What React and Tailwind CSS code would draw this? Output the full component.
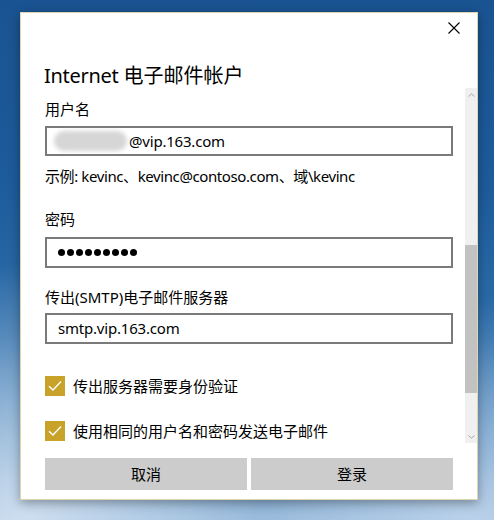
const font = "font-['Noto_Sans','Noto_Sans_CJK_SC',sans-serif]"

function Field({ children, className = '' }) {
  return (
    <div className={`flex items-center border-2 border-[#7a7a7a] bg-white pl-[11px] text-[15px] tracking-[-0.2px] text-black ${className}`}>
      {children}
    </div>
  )
}

function CheckRow({ label, className = '' }) {
  return (
    <label className={`flex h-[20px] items-center gap-[8px] ${className}`}>
      <span className="flex h-[20px] w-[20px] items-center justify-center bg-[#c9a22a]">
        <svg width="14" height="12" viewBox="0 0 14 12" fill="none">
          <path d="M1 6.2 L5 10 L13 1.5" stroke="white" strokeWidth="1.4" />
        </svg>
      </span>
      <span className="text-[15px] leading-[20px] text-black">{label}</span>
    </label>
  )
}

function Scrollbar() {
  return (
    <div className="flex w-[12px] flex-col bg-[#f0f0f0]">
      <div className="flex h-[13px] items-center justify-center">
        <svg width="7" height="4" viewBox="0 0 7 4" fill="none">
          <path d="M0.5 3.5 L3.5 0.8 L6.5 3.5" stroke="#a6a6a6" strokeWidth="1" />
        </svg>
      </div>
      <div className="h-[144px]" />
      <div className="h-[148px] bg-[#c2c2c2]" />
      <div className="flex-1" />
      <div className="flex h-[13px] items-center justify-center">
        <svg width="7" height="4" viewBox="0 0 7 4" fill="none">
          <path d="M0.5 0.5 L3.5 3.2 L6.5 0.5" stroke="#a6a6a6" strokeWidth="1" />
        </svg>
      </div>
    </div>
  )
}

export default function App() {
  return (
    <div
      className={`h-[520px] w-[494px] overflow-hidden pl-[20px] pt-[12px] ${font} bg-[radial-gradient(ellipse_at_5%_100%,rgba(214,228,243,0.85),transparent_35%),radial-gradient(ellipse_at_95%_100%,rgba(196,216,238,0.75),transparent_30%),linear-gradient(to_bottom,#1a5391_0%,#1d5b9b_35%,#2e6eaa_65%,#6a9bc8_88%,#9cbcdc_100%)]`}
    >
      <div className="flex h-[488px] w-[458px] flex-col border border-[#ddd6ad] bg-white shadow-[0_3px_10px_rgba(0,0,0,0.35)]">
        {/* header */}
        <div className="flex h-[75px] flex-col">
          <div className="flex justify-end pr-[17px] pt-[9px]">
            <svg width="12" height="12" viewBox="0 0 12 12" fill="none">
              <path d="M0.5 0.5 L11.5 11.5 M11.5 0.5 L0.5 11.5" stroke="black" strokeWidth="1.1" />
            </svg>
          </div>
          <h1 className="mt-[29px] pl-[23px] text-[20px] leading-[26px] text-black">
            <span className="tracking-[-0.3px]">Internet</span> 电子邮件帐户
          </h1>
        </div>

        {/* scroll area */}
        <div className="flex h-[355px]">
          <div className="flex flex-1 flex-col pl-[24px] pr-[12px]">
            <div className="mt-[11px] text-[15px] leading-[20px] text-black">用户名</div>
            <Field className="mt-[7px] h-[30px]">
              <span className="ml-[-4px] mr-[2px] inline-block h-[20px] w-[73px] rounded-full bg-[#d6d6d6] blur-[2px]" />
              <span>@vip.163.com</span>
            </Field>
            <div className="mt-[10px] text-[15px] leading-[20px] tracking-[-0.4px] text-black">示例: kevinc、kevinc@contoso.com、域\kevinc</div>

            <div className="mt-[23px] text-[15px] leading-[20px] text-black">密码</div>
            <Field className="mt-[8px] h-[31px]">
              <div className="flex gap-[2px]">
                {Array.from({ length: 9 }).map((_, i) => (
                  <span key={i} className="h-[7px] w-[7px] rounded-full bg-black" />
                ))}
              </div>
            </Field>

            <div className="mt-[19px] text-[15px] leading-[20px] text-black">传出(SMTP)电子邮件服务器</div>
            <Field className="mt-[6px] h-[31px]">smtp.vip.163.com</Field>

            <CheckRow className="mt-[32px]" label="传出服务器需要身份验证" />
            <CheckRow className="mt-[25px]" label="使用相同的用户名和密码发送电子邮件" />
          </div>
          <Scrollbar />
        </div>

        {/* buttons */}
        <div className="mt-[15px] flex gap-[4px] pl-[24px] pr-[24px]">
          <button className="h-[32px] flex-1 bg-[#cccccc] text-[15px] text-black">取消</button>
          <button className="h-[32px] flex-1 bg-[#cccccc] text-[15px] text-black">登录</button>
        </div>
      </div>
    </div>
  )
}
